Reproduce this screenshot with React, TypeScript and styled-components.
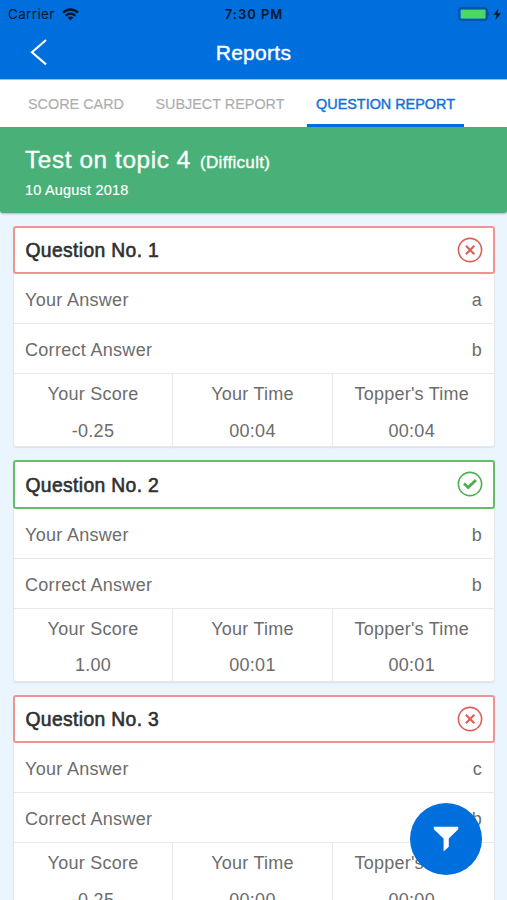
import React from "react";
import styled, { createGlobalStyle } from "styled-components";

const GlobalStyle = createGlobalStyle`
  * { box-sizing: border-box; }
  body { margin: 0; background: #ebf5fe; overflow: hidden; }
`;

const BLUE = "#006fde";
const RED = "#dc5f57";
const GREEN = "#4cae50";

const Screen = styled.div`
  width: 507px;
  height: 900px;
  overflow: hidden;
  position: relative;
  background: #ebf5fe;
  color: #6c6c6c;
  font-family: "Liberation Sans", Arial, sans-serif;
  font-size: 18px;
`;

const StatusBar = styled.div`
  height: 27px;
  padding: 0 6px 0 8px;
  display: grid;
  grid-template-columns: 1fr auto 1fr;
  align-items: center;
  background: ${BLUE};
  color: #06182b;
  font-family: Inter, sans-serif;
  font-size: 13.4px;
  line-height: 28px;
`;

const StatusSide = styled.div<{ $end?: boolean }>`
  display: flex;
  align-items: center;
  gap: 7px;
  letter-spacing: ${(p) => (p.$end ? "0" : "0.4px")};
  justify-content: ${(p) => (p.$end ? "flex-end" : "flex-start")};
`;

const Clock = styled.span`
  font-weight: 600;
  font-size: 13px;
  padding-right: 1px;
  letter-spacing: 0.95px;
`;

const NavBar = styled.header`
  height: 53px;
  padding: 0 30px;
  display: grid;
  grid-template-columns: 18px 1fr 18px;
  align-items: center;
  background: ${BLUE};
  border-bottom: 1px solid #8cc3f8;
`;

const NavTitle = styled.h1`
  margin: 0;
  color: #fff;
  font-size: 21px;
  font-weight: 400;
  letter-spacing: 0.3px;
  line-height: 52px;
  text-align: center;
  -webkit-text-stroke: 0.4px #fff;
`;

const Tabs = styled.nav`
  height: 47px;
  padding-left: 19px;
  display: flex;
  background: #fff;
`;

const Tab = styled.div<{ $width: number; $active?: boolean }>`
  width: ${(p) => p.$width}px;
  text-align: center;
  line-height: 48px;
  font-size: 14.4px;
  white-space: nowrap;
  color: ${(p) => (p.$active ? "#1672d5" : "#adadad")};
  border-bottom: ${(p) => (p.$active ? `3px solid ${BLUE}` : "0")};
  -webkit-text-stroke: ${(p) => (p.$active ? "0.45px #1672d5" : "0.15px #adadad")};
`;

const Banner = styled.section`
  height: 86px;
  padding: 18px 25px 0;
  background: #49b077;
  color: #fff;
  border-radius: 0 0 3px 3px;
  box-shadow: 0 1px 2px rgba(60, 80, 100, 0.35);
`;

const BannerTitle = styled.div`
  display: flex;
  align-items: baseline;
  gap: 9px;
  line-height: 30px;
  font-size: 24.3px;
  letter-spacing: 0.62px;
  -webkit-text-stroke: 0.35px #fff;
`;

const Level = styled.span`
  font-size: 17px;
  letter-spacing: 0.32px;
`;

const BannerDate = styled.div`
  margin-top: 3px;
  line-height: 18px;
  font-size: 14.5px;
  letter-spacing: 0.2px;
  -webkit-text-stroke: 0.15px #fff;
`;

const List = styled.main`
  padding: 12.5px 12.5px 0 13px;
  display: flex;
  flex-direction: column;
  gap: 13px;
`;

const Card = styled.article`
  height: 221.6px;
  flex: none;
  background: #fff;
  border-radius: 4px;
  box-shadow: inset 0 0 0 1px #e6e9eb, 0 1px 1px rgba(80, 100, 120, 0.13);
`;

const CardHead = styled.div<{ $ok: boolean }>`
  height: 48.5px;
  padding: 0 10px 0 10.5px;
  display: flex;
  align-items: center;
  justify-content: space-between;
  border: 2px solid ${(p) => (p.$ok ? "#66bd69" : "#f09492")};
  border-radius: 3px;
  background: #fff;
`;

const CardTitle = styled.h2`
  margin: 0;
  line-height: 44px;
  font-size: 19.3px;
  font-weight: 400;
  color: #303030;
  letter-spacing: 0.36px;
  padding-top: 3px;
  -webkit-text-stroke: 0.6px #303030;
`;

const AnswerRow = styled.div`
  height: 50px;
  margin: 0 1px;
  padding: 0 11.5px 0 11px;
  display: flex;
  justify-content: space-between;
  line-height: 53px;
  letter-spacing: 0.3px;
  border-bottom: 1px solid #e9e9e9;
`;

const Stats = styled.div`
  height: 72px;
  margin: 0 1px;
  display: grid;
  grid-template-columns: 158px 160px 1fr;
`;

const Stat = styled.div`
  display: flex;
  flex-direction: column;
  align-items: center;
  padding-top: 2px;
  line-height: 36.5px;
  letter-spacing: 0.25px;
  & + & {
    border-left: 1px solid #e9e9e9;
  }
  &:last-child {
    padding-right: 3px;
  }
`;

const FilterButton = styled.button`
  position: absolute;
  left: 410px;
  top: 803px;
  width: 72px;
  height: 72px;
  padding: 0;
  border: 0;
  border-radius: 50%;
  background: ${BLUE};
  display: flex;
  align-items: center;
  justify-content: center;
`;

const WifiIcon = () => (
  <svg width="17" height="13" viewBox="0 0 17 13" fill="none" stroke="#06182b" strokeWidth="2.3">
    <path d="M1 4.7C5.2.4 11.8.4 16 4.7" />
    <path d="M3.7 7.7c2.7-2.7 6.9-2.7 9.6 0" />
    <path d="M8.5 12.4 5.7 9.6c1.6-1.5 4-1.5 5.6 0Z" fill="#06182b" stroke="none" />
  </svg>
);

const BatteryIcon = () => (
  <svg width="43" height="15" viewBox="0 0 43 15">
    <rect x="1" y="1" width="28" height="12" rx="2.5" fill="#006fde" stroke="#0a4c94" strokeWidth="1.5" />
    <rect x="2.8" y="2.8" width="24.6" height="8.7" rx="0.8" fill="#4bd964" />
    <path d="M30.4 5c1.5.6 1.5 3.5 0 4.1Z" fill="#0a4c94" />
    <path d="M40.4 1.6 35.5 8h3.1l-1.4 5.2 5.7-7h-3.5Z" fill="#06182b" />
  </svg>
);

const BackIcon = () => (
  <svg width="18" height="28" viewBox="0 0 18 28" fill="none" stroke="#fff" strokeWidth="2.1">
    <path d="M16 1 2 13.2 16 25.4" />
  </svg>
);

const ResultIcon = ({ ok }: { ok: boolean }) => (
  <svg width="26" height="26" viewBox="0 0 26 26" fill="none" stroke={ok ? GREEN : RED}>
    <circle cx="13" cy="13" r="11.6" strokeWidth="1.6" />
    {ok ? (
      <path d="m7 12.6 4.2 4 7.7-7.7" strokeWidth="2.8" />
    ) : (
      <path d="m8.9 8.8 8.4 8.4m0-8.4-8.4 8.4" strokeWidth="2.1" />
    )}
  </svg>
);

const FunnelIcon = () => (
  <svg width="26" height="26" viewBox="0 0 26 26" fill="#fff">
    <path d="M.8.8h24.4v2.4l-9.4 9.3v8.2l-5.2 4.7V12.5L.8 3.2Z" />
  </svg>
);

const questions = [
  { no: 1, ok: false, given: "a", correct: "b", score: "-0.25", time: "00:04", top: "00:04" },
  { no: 2, ok: true, given: "b", correct: "b", score: "1.00", time: "00:01", top: "00:01" },
  { no: 3, ok: false, given: "c", correct: "b", score: "-0.25", time: "00:00", top: "00:00" },
];

export default function App() {
  return (
    <Screen>
      <GlobalStyle />
      <StatusBar>
        <StatusSide>
          <span>Carrier</span>
          <WifiIcon />
        </StatusSide>
        <Clock>7:30 PM</Clock>
        <StatusSide $end>
          <BatteryIcon />
        </StatusSide>
      </StatusBar>
      <NavBar>
        <BackIcon />
        <NavTitle>Reports</NavTitle>
      </NavBar>
      <Tabs>
        <Tab $width={114}>SCORE CARD</Tab>
        <Tab $width={174}>SUBJECT REPORT</Tab>
        <Tab $width={157} $active>QUESTION REPORT</Tab>
      </Tabs>
      <Banner>
        <BannerTitle>
          <span>Test on topic 4</span>
          <Level>(Difficult)</Level>
        </BannerTitle>
        <BannerDate>10 August 2018</BannerDate>
      </Banner>
      <List>
        {questions.map((q) => (
          <Card key={q.no}>
            <CardHead $ok={q.ok}>
              <CardTitle>Question No. {q.no}</CardTitle>
              <ResultIcon ok={q.ok} />
            </CardHead>
            <AnswerRow>
              <span>Your Answer</span>
              <span>{q.given}</span>
            </AnswerRow>
            <AnswerRow>
              <span>Correct Answer</span>
              <span>{q.correct}</span>
            </AnswerRow>
            <Stats>
              <Stat>
                <span>Your Score</span>
                <span>{q.score}</span>
              </Stat>
              <Stat>
                <span>Your Time</span>
                <span>{q.time}</span>
              </Stat>
              <Stat>
                <span>Topper's Time</span>
                <span>{q.top}</span>
              </Stat>
            </Stats>
          </Card>
        ))}
      </List>
      <FilterButton aria-label="Filter">
        <FunnelIcon />
      </FilterButton>
    </Screen>
  );
}
